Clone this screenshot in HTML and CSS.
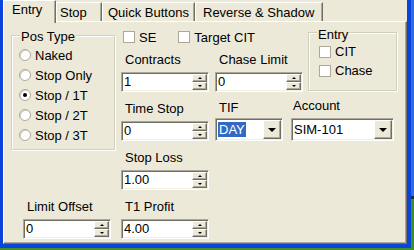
FILE: index.html
```html
<!DOCTYPE html>
<html lang="en">

<head>
    <meta charset="UTF-8">
    <meta name="viewport" content="width=device-width, initial-scale=1.0">
    <title>Order Settings</title>
    <link rel="stylesheet" href="styles.css">
</head>

<body>

    <div class="window">
        <div class="tabs">
            <div class="tab tab-entry active">Entry</div>
            <div class="tab tab-stop">Stop</div>
            <div class="tab tab-quick">Quick Buttons</div>
            <div class="tab tab-reverse">Reverse &amp; Shadow</div>
        </div>

        <div class="panel">
            <div class="group pos-type">
                <span class="legend">Pos Type</span>
                <label class="radio"><span class="dot"></span>Naked</label>
                <label class="radio"><span class="dot"></span>Stop Only</label>
                <label class="radio checked"><span class="dot"></span>Stop / 1T</label>
                <label class="radio"><span class="dot"></span>Stop / 2T</label>
                <label class="radio"><span class="dot"></span>Stop / 3T</label>
            </div>

            <div class="top">
                <div class="top-main">
                    <div class="checks">
                        <label class="check"><span class="box"></span>SE</label>
                        <label class="check"><span class="box"></span>Target CIT</label>
                    </div>
                    <div class="row">
                        <div class="field">
                            <div class="caption">Contracts</div>
                            <div class="spin"><input type="text" value="1"><span class="arrows"><span class="up"></span><span class="down"></span></span></div>
                        </div>
                        <div class="field">
                            <div class="caption">Chase Limit</div>
                            <div class="spin"><input type="text" value="0"><span class="arrows"><span class="up"></span><span class="down"></span></span></div>
                        </div>
                    </div>
                </div>
                <div class="group entry">
                    <span class="legend">Entry</span>
                    <label class="check"><span class="box"></span>CIT</label>
                    <label class="check"><span class="box"></span>Chase</label>
                </div>
            </div>

            <div class="row row-time">
                <div class="field">
                    <div class="caption">Time Stop</div>
                    <div class="spin"><input type="text" value="0"><span class="arrows"><span class="up"></span><span class="down"></span></span></div>
                </div>
                <div class="field field-tif">
                    <div class="caption">TIF</div>
                    <div class="combo combo-tif"><span class="value"><span class="selected">DAY</span></span><span class="drop"></span></div>
                </div>
                <div class="field field-account">
                    <div class="caption">Account</div>
                    <div class="combo combo-account"><span class="value">SIM-101</span><span class="drop"></span></div>
                </div>
            </div>

            <div class="field stop-loss">
                <div class="caption">Stop Loss</div>
                <div class="spin"><input type="text" value="1.00"><span class="arrows"><span class="up"></span><span class="down"></span></span></div>
            </div>

            <div class="field limit-offset">
                <div class="caption">Limit Offset</div>
                <div class="spin"><input type="text" value="0"><span class="arrows"><span class="up"></span><span class="down"></span></span></div>
            </div>

            <div class="field t1-profit">
                <div class="caption">T1 Profit</div>
                <div class="spin"><input type="text" value="4.00"><span class="arrows"><span class="up"></span><span class="down"></span></span></div>
            </div>
        </div>
    </div>

</body>

</html>
```

FILE: styles.css
```css
* {
    margin: 0;
    padding: 0;
    box-sizing: border-box;
    font-family: "Liberation Sans", Arial, sans-serif;
}

body {
    width: 414px;
    height: 250px;
    overflow: hidden;
    font-size: 13px;
    color: #000;
    background: linear-gradient(to bottom, #2f6be4 0 196px, #1c3524 196px 199px, #3f8f2d 199px);
}

.window {
    display: flex;
    flex-direction: column;
    width: 411px;
    height: 248px;
    background: #ece9d8;
    border-left: 3px solid #0a44dc;
    border-right: 4px solid #0a44dc;
    border-bottom: 4px solid #0a44dc;
}

/* tab strip */

.tabs {
    display: flex;
    align-items: flex-end;
    height: 21px;
}

.tab {
    height: 19px;
    padding-top: 2px;
    line-height: 16px;
    white-space: nowrap;
    background: #ece9d8;
    border-top: 1px solid #fff;
    border-left: 1px solid #fff;
    border-right: 1px solid #716f64;
    box-shadow: inset -1px 0 #aca899;
}

.tab.active {
    position: relative;
    z-index: 1;
    height: 23px;
    margin-bottom: -2px;
    padding-top: 1px;
}

.tab-entry {
    width: 53px;
    padding-left: 8px;
}

.tab-stop {
    width: 46px;
    padding-left: 3px;
}

.tab-quick {
    width: 93px;
    padding-left: 5px;
}

.tab-reverse {
    width: 128px;
    padding-left: 7px;
}

/* page body */

.panel {
    flex: 1;
    display: grid;
    grid-template-columns: 104px 1fr;
    grid-template-rows: 64px 40px 40px 40px;
    column-gap: 6px;
    row-gap: 9px;
    align-content: start;
    padding: 6px 0 0 7px;
    border-top: 1px solid #fff;
    border-left: 1px solid #fff;
    border-right: 1px solid #716f64;
    border-bottom: 1px solid #716f64;
    box-shadow: inset -1px -1px #aca899;
}

.group {
    position: relative;
    border: 1px solid #d0d0bf;
    box-shadow: inset 1px 1px #fff, 1px 1px #fff;
}

.legend {
    position: absolute;
    left: 8px;
    padding: 0 1px;
    line-height: 16px;
    background: #ece9d8;
}

.pos-type {
    grid-column: 1;
    grid-row: 1 / span 3;
    align-self: start;
    margin-top: 7px;
    padding: 9px 0 4px 7px;
}

.pos-type .legend {
    top: -7px;
}

.radio {
    display: flex;
    align-items: center;
    gap: 4px;
    height: 20px;
}

.dot {
    width: 12px;
    height: 12px;
    border-radius: 50%;
    background: #fff;
    border: 1px solid #aca899;
    box-shadow: inset 1px 1px #d6d3c6;
    display: flex;
    align-items: center;
    justify-content: center;
}

.radio.checked .dot::after {
    content: "";
    width: 4px;
    height: 4px;
    border-radius: 50%;
    background: #000;
}

.check {
    display: flex;
    align-items: center;
    gap: 4px;
    height: 19px;
}

.box {
    width: 12px;
    height: 12px;
    background: #fff;
    border: 1px solid #aca899;
}

.top {
    grid-column: 2;
    grid-row: 1;
    display: flex;
}

.top-main {
    width: 187px;
}

.checks {
    display: flex;
    gap: 22px;
    height: 16px;
    margin: 1px 0 7px 2px;
}

.checks .check {
    height: 16px;
}

.entry {
    width: 89px;
    height: 59px;
    margin-top: 4px;
    padding: 9px 0 0 10px;
}

.entry .legend {
    top: -6px;
}

.row {
    display: flex;
    gap: 6px;
}

.row-time {
    grid-column: 2;
    grid-row: 2;
}

.caption {
    line-height: 16px;
    padding-left: 4px;
    margin-bottom: 4px;
}

.spin {
    display: flex;
    width: 88px;
    height: 20px;
    background: #fff;
    border: 1px solid;
    border-color: #aca899 #fff #fff #aca899;
    box-shadow: inset 1px 1px #716f64, inset -1px -1px #f1efe2;
    padding: 1px;
}

.spin input {
    flex: 1;
    min-width: 0;
    border: none;
    outline: none;
    background: transparent;
    font-size: 13px;
    line-height: 16px;
    padding: 0 0 0 1px;
    color: #000;
}

.arrows {
    display: flex;
    flex-direction: column;
    width: 15px;
}

.up, .down {
    flex: 1;
    display: flex;
    align-items: center;
    justify-content: center;
    background: #ece9d8;
    border: 1px solid;
    border-color: #fff #716f64 #716f64 #fff;
    box-shadow: inset -1px -1px #aca899;
}

.up::after, .down::after {
    content: "";
    border-left: 2px solid transparent;
    border-right: 2px solid transparent;
}

.up::after {
    border-bottom: 2px solid #000;
}

.down::after {
    border-top: 2px solid #000;
}

.field-tif .caption {
    margin-top: -1px;
    margin-bottom: 2px;
}

.field-account {
    margin-left: 2px;
}

.field-account .caption {
    margin-top: -3px;
    padding-left: 2px;
}

.combo {
    display: flex;
    height: 23px;
    background: #fff;
    border: 1px solid;
    border-color: #aca899 #fff #fff #aca899;
    box-shadow: inset 1px 1px #716f64, inset -1px -1px #f1efe2;
    padding: 1px;
}

.combo-tif {
    width: 68px;
}

.combo-account {
    width: 103px;
}

.value {
    flex: 1;
    padding: 2px 0 0 1px;
    line-height: 15px;
}

.selected {
    display: inline-block;
    padding: 0 1px;
    background: #316ac5;
    color: #fff;
}

.drop {
    width: 18px;
    display: flex;
    align-items: center;
    justify-content: center;
    background: #ece9d8;
    border: 1px solid;
    border-color: #fff #716f64 #716f64 #fff;
    box-shadow: inset -1px -1px #aca899;
}

.drop::after {
    content: "";
    border-left: 4px solid transparent;
    border-right: 4px solid transparent;
    border-top: 4px solid #000;
}

.stop-loss {
    grid-column: 2;
    grid-row: 3;
}

.limit-offset {
    grid-column: 1;
    grid-row: 4;
    margin-left: 12px;
}

.t1-profit {
    grid-column: 2;
    grid-row: 4;
}
```
